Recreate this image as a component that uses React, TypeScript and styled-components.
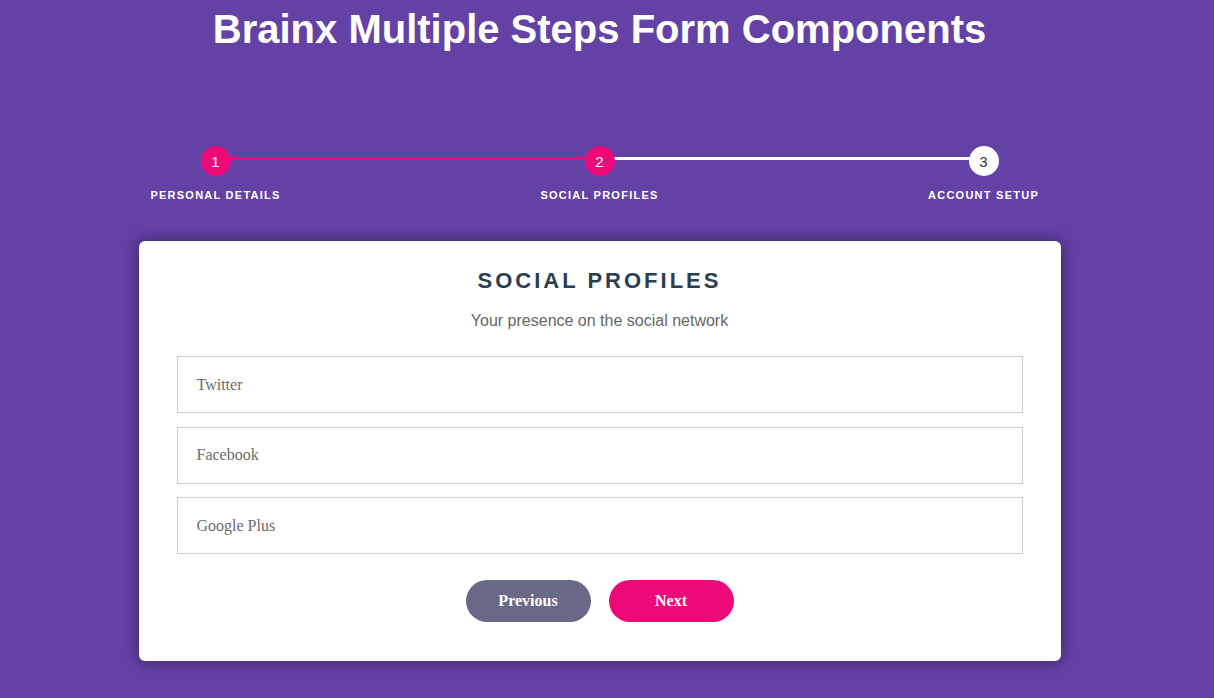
import React from 'react'
import styled, { createGlobalStyle } from 'styled-components'

const GlobalStyle = createGlobalStyle`
  html, body {
    margin: 0;
    padding: 0;
    background: #6441a5;
    font-family: 'Liberation Sans', Arial, sans-serif;
  }
  * {
    box-sizing: border-box;
  }
`

// the original was shot with a scrollbar, so everything centres on 1199px
const Page = styled.div`
  display: flex;
  flex-direction: column;
  align-items: center;
  min-height: 698px;
  padding: 0 15px 37px 0;
`

const Title = styled.h1`
  margin: 6px 0 0 0;
  font-size: 40px;
  line-height: 46px;
  font-weight: 700;
  color: #fff;
  text-align: center;
`

const Progress = styled.ol`
  display: grid;
  grid-template-columns: repeat(3, 384px);
  list-style: none;
  margin: 94px 0 0 0;
  padding: 0;
`

const Step = styled.li<{ active?: boolean; first?: boolean }>`
  position: relative;
  display: flex;
  flex-direction: column;
  align-items: center;

  ${(p) =>
    !p.first &&
    `
    &::before {
      content: '';
      position: absolute;
      top: 11px;
      left: -50%;
      width: 100%;
      height: 3px;
      background: ${p.active ? '#ee0979' : '#fff'};
      z-index: 0;
    }
  `}
`

const Dot = styled.span<{ active?: boolean }>`
  position: relative;
  z-index: 1;
  display: flex;
  align-items: center;
  justify-content: center;
  width: 30px;
  height: 30px;
  border-radius: 50%;
  background: ${(p) => (p.active ? '#ee0979' : '#fff')};
  color: ${(p) => (p.active ? '#fff' : '#333')};
  font-size: 15px;
`

const StepLabel = styled.span`
  margin-top: 12px;
  font-size: 11px;
  line-height: 14px;
  font-weight: 700;
  letter-spacing: 1.25px;
  text-transform: uppercase;
  color: #fff;
`

const Card = styled.form`
  display: flex;
  flex-direction: column;
  align-items: center;
  width: 922px;
  margin-top: 39px;
  padding: 25px 38px 39px;
  background: #fff;
  border-radius: 6px;
  box-shadow: 0 0 15px 1px rgba(0, 0, 0, 0.4);
`

const Heading = styled.h2`
  margin: 0;
  font-size: 22px;
  line-height: 30px;
  font-weight: 700;
  letter-spacing: 3px;
  text-transform: uppercase;
  color: #2c3e50;
`

const Subtitle = styled.h3`
  margin: 15px 0 25px;
  font-size: 16px;
  line-height: 20px;
  font-weight: 400;
  color: #666;
`

const Fields = styled.div`
  display: flex;
  flex-direction: column;
  gap: 13.5px;
  width: 100%;
`

const Input = styled.input`
  width: 100%;
  height: 57px;
  padding: 0 19px;
  border: 1px solid #ccc;
  border-radius: 0;
  font-family: 'Liberation Serif', 'Times New Roman', serif;
  font-size: 16px;
  color: #2c3e50;
  outline: none;

  &::placeholder {
    color: #6b6b6b;
  }
`

const Actions = styled.div`
  display: flex;
  gap: 18px;
  margin-top: 26px;
`

const ActionButton = styled.button<{ variant: 'prev' | 'next' }>`
  width: 125px;
  height: 42px;
  border: none;
  border-radius: 21px;
  background: ${(p) => (p.variant === 'next' ? '#ee0979' : '#686887')};
  color: #fff;
  font-family: 'Liberation Serif', 'Times New Roman', serif;
  font-size: 16px;
  font-weight: 700;
  cursor: pointer;
`

const steps = ['Personal Details', 'Social Profiles', 'Account Setup']
const current = 1

const App = () => {
  return (
    <Page>
      <GlobalStyle />
      <Title>Brainx Multiple Steps Form Components</Title>
      <Progress>
        {steps.map((s, i) => (
          <Step key={s} first={i === 0} active={i <= current}>
            <Dot active={i <= current}>{i + 1}</Dot>
            <StepLabel>{s}</StepLabel>
          </Step>
        ))}
      </Progress>
      <Card onSubmit={(e) => e.preventDefault()}>
        <Heading>Social Profiles</Heading>
        <Subtitle>Your presence on the social network</Subtitle>
        <Fields>
          <Input type="text" name="twitter" placeholder="Twitter" />
          <Input type="text" name="facebook" placeholder="Facebook" />
          <Input type="text" name="gplus" placeholder="Google Plus" />
        </Fields>
        <Actions>
          <ActionButton type="button" variant="prev">
            Previous
          </ActionButton>
          <ActionButton type="submit" variant="next">
            Next
          </ActionButton>
        </Actions>
      </Card>
    </Page>
  )
}

export default App
